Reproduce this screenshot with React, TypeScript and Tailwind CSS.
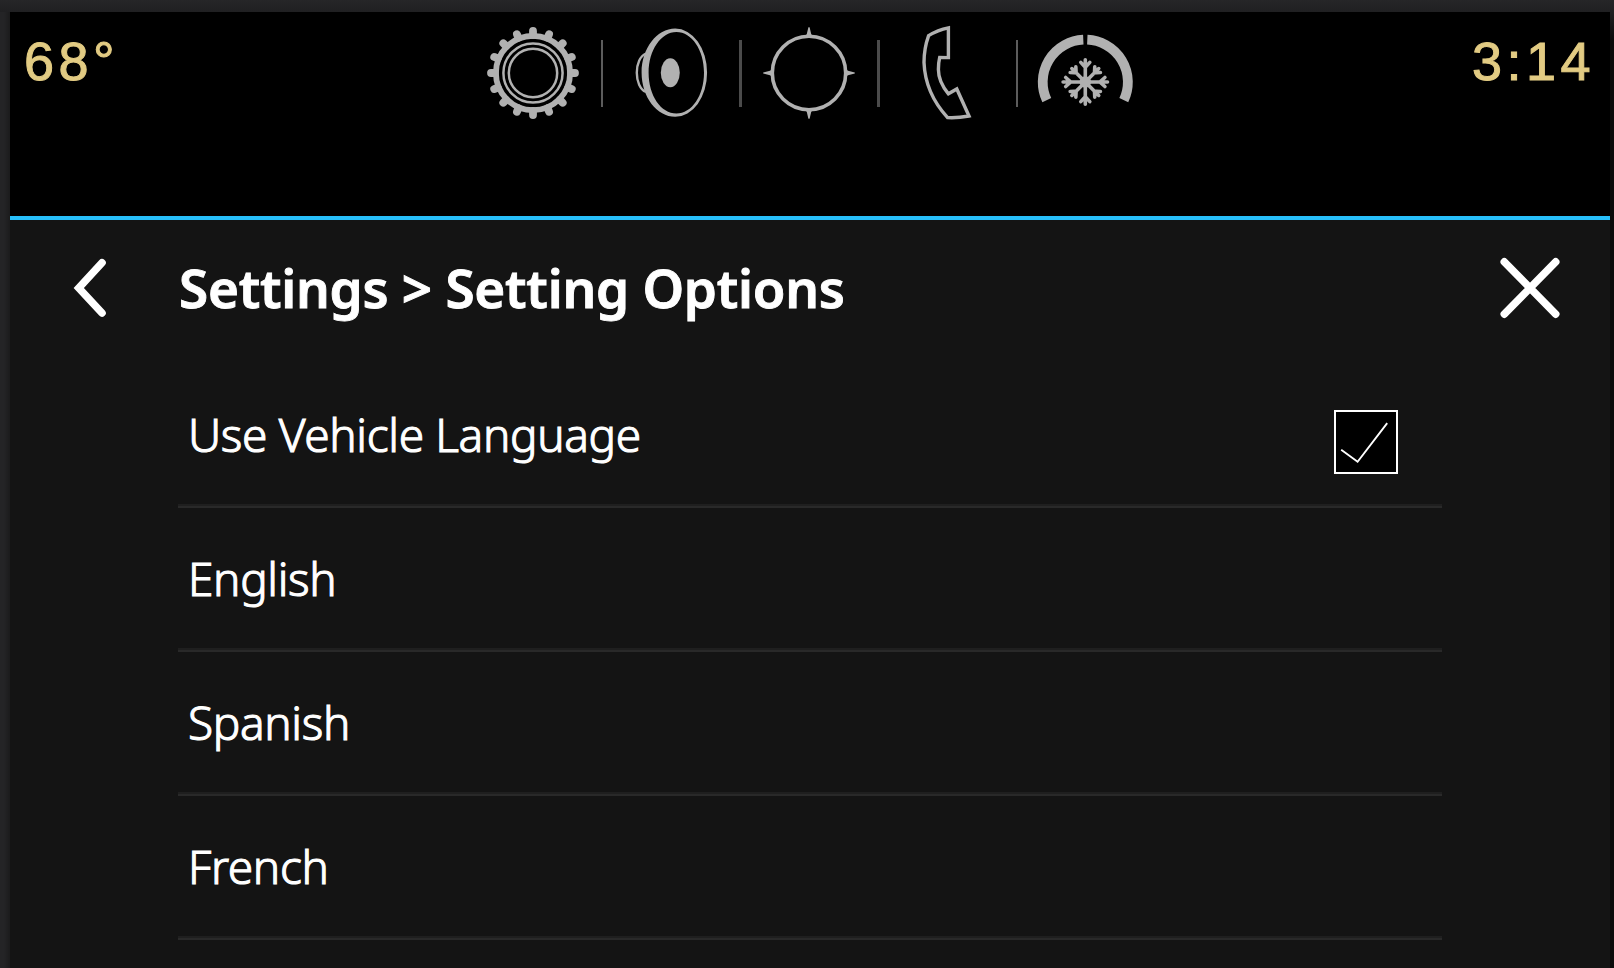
import { Fragment, type ReactNode } from 'react';

const INK = '#b1b1b1';

function Glyph({ children }: { children: ReactNode }) {
  return (
    <svg viewBox="0 0 100 100" className="size-[100px]" fill="none" stroke={INK}>
      {children}
    </svg>
  );
}

function GearIcon() {
  const teeth = Array.from({ length: 16 }, (_, i) => i * 22.5);
  return (
    <Glyph>
      <circle cx="49" cy="50" r="37.1" strokeWidth="5.8" />
      {teeth.map((a) => (
        <line key={a} x1="49" y1="12" x2="49" y2="8" strokeWidth="7.8" strokeLinecap="round" transform={`rotate(${a} 49 50)`} />
      ))}
      <circle cx="49" cy="50" r="29.6" strokeWidth="2.5" />
      <circle cx="49" cy="50" r="24.2" strokeWidth="2.5" />
    </Glyph>
  );
}

function SpeakerIcon() {
  return (
    <Glyph>
      <path
        fill={INK}
        stroke="none"
        fillRule="evenodd"
        d="M53.2 5.6A31.8 44 0 0 1 53.2 93.8C35 93.8 19.6 74 19.6 49.7S35 5.6 53.2 5.6ZM54.4 8.9C39 8.9 26.6 27 26.6 49.7S39 90.5 54.4 90.5S82 72.4 82 49.7S70 8.9 54.4 8.9Z"
      />
      <path d="M24 30.5C18 33 14.8 41 14.8 49.7S18 66.5 24 69" strokeWidth="2.4" />
      <ellipse cx="48.3" cy="49.7" rx="9.5" ry="14.5" fill={INK} stroke="none" />
    </Glyph>
  );
}

function CompassIcon() {
  return (
    <Glyph>
      <circle cx="49" cy="50" r="36.7" strokeWidth="3.6" />
      {[0, 90, 180, 270].map((a) => (
        <path key={a} d="M48.4 4.2H49.6L51.2 11L53.2 14H44.8L46.8 11Z" fill={INK} stroke="none" transform={`rotate(${a} 49 50)`} />
      ))}
    </Glyph>
  );
}

function PhoneIcon() {
  return (
    <Glyph>
      <path
        strokeWidth="3.4"
        d="M50.4 4.8C42.9 6.3 36.4 9 30.6 12.6C27.4 21.5 26 30 26 39.5C26.7 57 33.4 77 49.6 94.6C56.4 95 64 94.3 71 93L58.8 66L50.4 70.8C43.9 63 40.4 54 40.4 46.5C40.4 42 40.8 38 41.7 34.4L50.4 34.6Z"
      />
    </Glyph>
  );
}

function ClimateIcon() {
  return (
    <Glyph>
      <path d="M47.3 16.7A42.4 42.4 0 0 0 10.8 77.2M51.3 16.7A42.4 42.4 0 0 1 87.8 77.2" strokeWidth="9.8" />
      <g strokeWidth="3.6" strokeLinecap="round">
        {[0, 90, 180, 270].map((a) => (
          <path key={a} d="M49.3 59V36.8M44.8 39.4L49.3 44.4L53.8 39.4" transform={`rotate(${a} 49.3 59)`} />
        ))}
        {[45, 135, 225, 315].map((a) => (
          <path key={a} d="M49.3 59V40M45.3 41.6L49.3 46L53.3 41.6" transform={`rotate(${a} 49.3 59)`} />
        ))}
      </g>
      <circle cx="49.3" cy="59" r="5.8" fill={INK} stroke="none" />
    </Glyph>
  );
}

const shortcuts = [
  { label: 'Settings', Icon: GearIcon, divider: '' },
  { label: 'Audio', Icon: SpeakerIcon, divider: 'w-0.5 bg-[#5c5c5c]' },
  { label: 'Navigation', Icon: CompassIcon, divider: 'w-[3px] bg-[#4b4b4b]' },
  { label: 'Phone', Icon: PhoneIcon, divider: 'w-[3px] bg-[#4b4b4b]' },
  { label: 'Climate', Icon: ClimateIcon, divider: 'w-0.5 ml-px bg-[#5c5c5c]' },
];

const readout =
  "font-['Liberation_Sans',sans-serif] text-[54px] leading-[60px] tracking-[4.5px] text-[#e2cb83] [-webkit-text-stroke:1px_#e2cb83]";

const languages = ['Use Vehicle Language', 'English', 'Spanish', 'French'];

export default function App() {
  return (
    <div className="flex h-[968px] w-[1614px] flex-col overflow-hidden bg-[#0b0b0b] font-['Noto_Sans',sans-serif]">
      <div className="h-3 shrink-0 bg-linear-to-b from-[#262628] to-[#202022]" />
      <div className="flex min-h-0 flex-1">
        <div className="w-2.5 shrink-0 bg-linear-to-r from-[#242426] from-40% to-[#1b1b1c]" />
        <main className="flex w-[1600px] shrink-0 flex-col bg-[#141414]">
          <header className="grid h-52 shrink-0 grid-cols-[455px_690px_1fr] border-b-4 border-[#27bffb] bg-black">
            <div className={`pt-[19px] pl-[14px] ${readout}`}>68°</div>
            <nav className="flex items-start pt-[11px]">
              {shortcuts.map(({ label, Icon, divider }) => (
                <Fragment key={label}>
                  {divider && (
                    <div className="-mr-px -ml-[3px] mt-[17px] flex h-[67px] w-1 justify-center">
                      <div className={divider} />
                    </div>
                  )}
                  <button aria-label={label} className="flex w-[138px] justify-center">
                    <Icon />
                  </button>
                </Fragment>
              ))}
            </nav>
            <div className={`pt-[19px] pr-[15px] text-right ${readout}`}>3:14</div>
          </header>

          <div className="flex h-36 shrink-0 items-center pr-[50px] pb-2.5 pl-[62px]">
            <button aria-label="Back" className="w-[107px]">
              <svg viewBox="0 0 40 64" className="mt-0.5 h-16 w-10" fill="none" stroke="white" strokeWidth="7.6" strokeLinecap="round">
                <path d="M30 6.8L6.8 32L30 57" />
              </svg>
            </button>
            <h1 className="flex-1 text-[53px] leading-none font-semibold tracking-[-0.25px] text-white [-webkit-text-stroke:0.9px_white]">
              Settings &gt; Setting Options
            </h1>
            <button aria-label="Close">
              <svg viewBox="0 0 60 64" className="mt-0.5 h-16 w-[60px]" fill="none" stroke="white" strokeWidth="7.6" strokeLinecap="round">
                <path d="M4.3 5.9L55.7 58.1M55.7 5.9L4.3 58.1" />
              </svg>
            </button>
          </div>

          <ul className="ml-[168px] w-[1264px]">
            {languages.map((name, i) => (
              <li key={name} className="h-36">
                <div className="flex h-[140px] items-center justify-between pr-11 pl-[10px]">
                  <span className="text-[46px] leading-[60px] font-light tracking-[-0.35px] text-white [-webkit-text-stroke:1.1px_white]">
                    {name}
                  </span>
                  {i === 0 && (
                    <div className="mt-4 size-16 border-2 border-white bg-black">
                      <svg viewBox="0 0 60 60" className="size-[60px]" fill="none" stroke="white" strokeWidth="1.9">
                        <path d="M5.2 37.8L21.6 49.8L51.2 11.2" />
                      </svg>
                    </div>
                  )}
                </div>
                <div className="h-1 border-t-2 border-[#1f1f1f] bg-[#292929]" />
              </li>
            ))}
          </ul>
        </main>
        <div className="flex-1 bg-linear-to-b from-[#202022] to-[#0b0b0b] to-[28px]" />
      </div>
    </div>
  );
}
